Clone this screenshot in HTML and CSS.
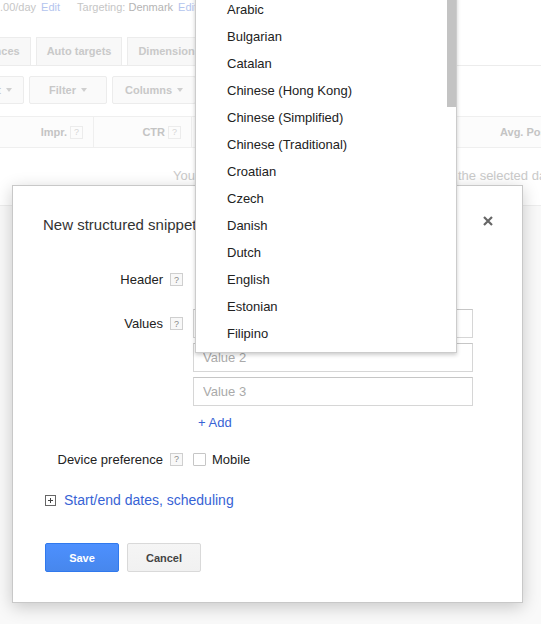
FILE: index.html
```html
<!DOCTYPE html>
<html>
<head>
<meta charset="utf-8">
<title>New structured snippet extension</title>
<link rel="stylesheet" href="styles.css">
</head>
<body>
<div class="page">
  <div class="summary">
    <span>.00/day</span>
    <span class="bg-link">Edit</span>
    <span class="targeting">Targeting: <span class="strong">Denmark</span></span>
    <span class="bg-link">Edit</span>
  </div>
  <div class="tabs">
    <div class="tab tab-cut">Audiences</div>
    <div class="tab">Auto targets</div>
    <div class="tab">Dimensions</div>
  </div>
  <div class="toolbar">
    <div class="tbtn tbtn-cut">Segment <span class="caret"></span></div>
    <div class="tbtn tbtn-filter">Filter <span class="caret"></span></div>
    <div class="tbtn tbtn-columns">Columns <span class="caret"></span></div>
  </div>
  <div class="thead">
    <div class="th th-impr">Impr. <span class="q">?</span></div>
    <div class="th th-ctr">CTR <span class="q">?</span></div>
    <div class="th th-gap"></div>
    <div class="th th-pos">Avg. Pos. <span class="q">?</span></div>
  </div>
  <div class="empty">You do not have any impressions or clicks during the selected date range.</div>
  <div class="lower"></div>
</div>

<div class="modal">
  <div class="modal-head">
    <div class="modal-title">New structured snippet extension</div>
    <svg class="close" width="10" height="10" viewBox="0 0 10 10"><path d="M1 1L9 9M9 1L1 9" stroke="#666" stroke-width="2.2"/></svg>
  </div>

  <div class="form">
    <div class="row row-header">
      <div class="label">Header</div>
      <span class="help">?</span>
      <div class="field select-wrap">
        <div class="select-trigger"></div>
        <div class="menu">
          <ul class="menu-list">
            <li class="menu-item">Arabic</li>
            <li class="menu-item">Bulgarian</li>
            <li class="menu-item">Catalan</li>
            <li class="menu-item">Chinese (Hong Kong)</li>
            <li class="menu-item">Chinese (Simplified)</li>
            <li class="menu-item">Chinese (Traditional)</li>
            <li class="menu-item">Croatian</li>
            <li class="menu-item">Czech</li>
            <li class="menu-item">Danish</li>
            <li class="menu-item">Dutch</li>
            <li class="menu-item">English</li>
            <li class="menu-item">Estonian</li>
            <li class="menu-item">Filipino</li>
          </ul>
          <div class="menu-track"><div class="menu-thumb"></div></div>
        </div>
      </div>
    </div>

    <div class="row row-values">
      <div class="label label-tall">Values</div>
      <span class="help help-tall">?</span>
      <div class="field values">
        <input class="text-input" type="text" placeholder="Value 1">
        <input class="text-input" type="text" placeholder="Value 2">
        <input class="text-input" type="text" placeholder="Value 3">
        <div class="add-link">+ Add</div>
      </div>
    </div>

    <div class="row row-device">
      <div class="label">Device preference</div>
      <span class="help">?</span>
      <div class="field check-field">
        <span class="checkbox"></span>
        <span class="check-label">Mobile</span>
      </div>
    </div>
  </div>

  <div class="schedule">
    <svg class="plus-box" width="11" height="11" viewBox="0 0 11 11"><rect x="0.5" y="0.5" width="10" height="10" fill="#fff" stroke="#666"/><path d="M3 5.5H8M5.5 3V8" stroke="#444"/></svg>
    <span class="schedule-link">Start/end dates, scheduling</span>
  </div>

  <div class="actions">
    <button class="btn btn-primary">Save</button>
    <button class="btn btn-secondary">Cancel</button>
  </div>
</div>
</body>
</html>
```

FILE: styles.css
```css
* { box-sizing: border-box; }
html, body { margin: 0; padding: 0; }
body {
  width: 541px;
  height: 624px;
  overflow: hidden;
  position: relative;
  background: #fff;
  color: #222;
  font-family: "Liberation Sans", Arial, sans-serif;
}

/* ---------- faded page behind the dialog ---------- */
.page {
  width: 541px;
  white-space: nowrap;
  color: #c6c6c6;
}
.summary {
  display: flex;
  align-items: center;
  height: 14px;
  font-size: 11px;
  line-height: 14px;
}
.summary .bg-link { color: #b3c4ee; margin-left: 5px; }
.targeting { margin-left: 17px; }
.targeting .strong { color: #b4b4b4; }

.tabs {
  display: flex;
  align-items: flex-end;
  margin-top: 23px;
  height: 29px;
  border-bottom: 1px solid #ececec;
}
.tab {
  height: 28px;
  padding: 0 10px;
  margin-right: 5px;
  border: 1px solid #ececec;
  border-bottom: none;
  background: #f8f8f8;
  font-size: 11px;
  font-weight: bold;
  line-height: 27px;
  color: #c9c9c9;
  flex: none;
}
.tab-cut { margin-left: -47px; }

.toolbar {
  display: flex;
  margin-top: 10px;
  height: 28px;
}
.tbtn {
  display: flex;
  align-items: center;
  justify-content: center;
  gap: 5px;
  height: 28px;
  margin-right: 5px;
  border: 1px solid #ececec;
  border-radius: 2px;
  background: #fafafa;
  font-size: 11px;
  font-weight: bold;
  color: #c8c8c8;
  flex: none;
}
.tbtn-cut { width: 82px; margin-left: -58px; justify-content: flex-end; padding-right: 11px; }
.tbtn-filter { width: 78px; }
.tbtn-columns { width: 84px; }
.caret {
  width: 0;
  height: 0;
  border-top: 4px solid #cfcfcf;
  border-left: 3px solid transparent;
  border-right: 3px solid transparent;
}

.thead {
  display: flex;
  margin-top: 12px;
  height: 32px;
  border-top: 1px solid #efefef;
  border-bottom: 1px solid #efefef;
  background: #fcfcfc;
  font-size: 11px;
  font-weight: bold;
  color: #c4c4c4;
}
.th {
  display: flex;
  align-items: center;
  justify-content: flex-end;
  gap: 3px;
  flex: none;
}
.th-impr { width: 94px; padding-right: 10px; border-right: 1px solid #efefef; }
.th-ctr { width: 98px; padding-right: 10px; border-right: 1px solid #efefef; }
.th-gap { width: 308px; }
.th-pos { justify-content: flex-start; }
.q {
  display: inline-flex;
  align-items: center;
  justify-content: center;
  width: 13px;
  height: 13px;
  border: 1px solid #ececec;
  font-size: 9px;
  font-weight: normal;
  color: #d6d6d6;
}

.empty {
  margin-top: 20px;
  padding-left: 173px;
  font-size: 13px;
  line-height: 16px;
  color: #cacaca;
}
.lower {
  margin-top: 21px;
  height: 430px;
  border-top: 1px solid #ededed;
  background: #f9f9f9;
}

/* ---------- dialog ---------- */
.modal {
  position: absolute;
  left: 12px;
  top: 185px;
  width: 511px;
  padding: 29px 29px 30px 30px;
  background: #fff;
  border: 1px solid #c8c8c8;
  box-shadow: 0 4px 16px rgba(0, 0, 0, 0.2);
}
.modal-head {
  display: flex;
  justify-content: space-between;
  align-items: flex-start;
  height: 20px;
}
.modal-title {
  font-size: 15px;
  line-height: 20px;
  color: #333;
  white-space: nowrap;
}
.close { margin-top: 1px; flex: none; }

.form { margin-top: 30px; }
.row { display: flex; align-items: center; }
.label {
  width: 120px;
  flex: none;
  text-align: right;
  font-size: 13px;
  color: #222;
  white-space: nowrap;
}
.help {
  display: flex;
  align-items: center;
  justify-content: center;
  flex: none;
  width: 13px;
  height: 13px;
  margin-left: 7px;
  border: 1px solid #cfcfcf;
  background: #f8f8f8;
  font-size: 9px;
  color: #8a8a8a;
}
.field { margin-left: 10px; width: 280px; flex: none; }

.row-header { height: 29px; }
.select-wrap { position: relative; height: 29px; }
.select-trigger {
  margin-left: 2px;
  width: 262px;
  height: 29px;
  border: 1px solid #d6d6d6;
}
.menu {
  position: absolute;
  left: 2px;
  top: -270px;
  width: 262px;
  display: flex;
  background: #fff;
  border: 1px solid rgba(0, 0, 0, 0.2);
  box-shadow: 0 2px 4px rgba(0, 0, 0, 0.2);
  z-index: 5;
}
.menu-list {
  flex: 1;
  margin: 0;
  padding: 0 0 5px 0;
  list-style: none;
}
.menu-item {
  height: 27px;
  line-height: 27px;
  padding-left: 31px;
  font-size: 13px;
  color: #222;
  white-space: nowrap;
}
.menu-track { width: 9px; flex: none; }
.menu-thumb { height: 111px; background: #c3c3c3; }

.row-values { margin-top: 15px; align-items: flex-start; }
.label-tall { line-height: 29px; }
.help-tall { margin-top: 8px; }
.values { display: flex; flex-direction: column; gap: 5px; }
.text-input {
  display: block;
  width: 280px;
  height: 29px;
  margin: 0;
  padding: 0 9px;
  border: 1px solid #d6d6d6;
  border-top-color: #c6c6c6;
  border-radius: 0;
  background: #fff;
  font-family: inherit;
  font-size: 13px;
  color: #222;
  outline: none;
}
.text-input::placeholder { color: #aaa; }
.add-link {
  margin-top: 3px;
  padding-left: 5px;
  font-size: 13px;
  line-height: 18px;
  color: #3763d5;
}

.row-device { margin-top: 17px; height: 20px; }
.check-field { display: flex; align-items: center; }
.checkbox {
  width: 13px;
  height: 13px;
  border: 1px solid #c6c6c6;
  border-radius: 1px;
  background: #fff;
  flex: none;
}
.check-label { margin-left: 6px; font-size: 13px; color: #222; }

.schedule {
  display: flex;
  align-items: center;
  margin-top: 21px;
  margin-left: 2px;
  height: 20px;
}
.plus-box { flex: none; }
.schedule-link {
  margin-left: 8px;
  font-size: 14px;
  color: #3763d5;
  white-space: nowrap;
}

.actions {
  display: flex;
  gap: 8px;
  margin-top: 33px;
  margin-left: 2px;
}
.btn {
  width: 74px;
  height: 29px;
  margin: 0;
  padding: 0;
  border-radius: 2px;
  font-family: inherit;
  font-size: 11px;
  font-weight: bold;
}
.btn-primary {
  border: 1px solid #3079ed;
  background: linear-gradient(#4d90fe, #4787ed);
  color: #fff;
}
.btn-secondary {
  border: 1px solid #d9d9d9;
  background: linear-gradient(#f5f5f5, #f1f1f1);
  color: #444;
}
```
